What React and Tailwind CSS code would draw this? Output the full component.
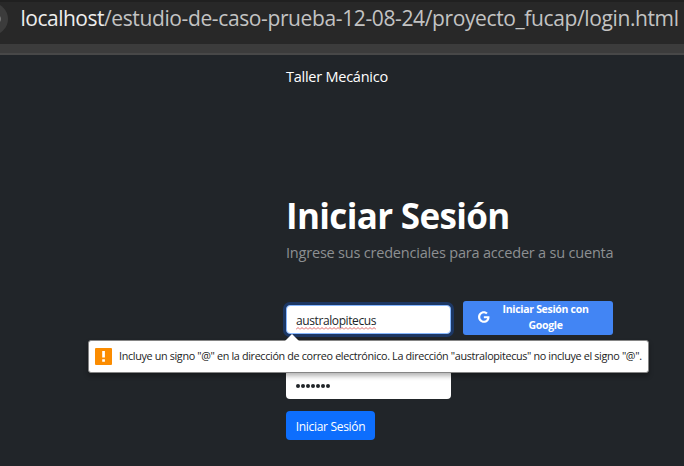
function GoogleIcon() {
  return (
    <svg viewBox="0 0 488 512" className="-mt-[2px] h-3 w-[11.5px] shrink-0" fill="#fff" aria-hidden="true">
      <path d="M488 261.8C488 403.3 391.1 504 248 504 110.8 504 0 393.2 0 256S110.8 8 248 8c66.800 0 123 24.500 166.300 64.900l-67.500 64.900C258.500 52.600 94.300 116.600 94.300 256c0 86.500 69.100 156.600 153.700 156.600 98.200 0 135-70.400 140.800-106.900H248v-85.300h236.100c2.300 12.700 3.900 24.900 3.900 41.400z" />
    </svg>
  );
}

function AddressBar() {
  return (
    <header className="h-[55px] overflow-hidden border-b-2 border-[#484848] bg-[#3c3c3c]">
      <div className="flex h-11 items-center border-t-2 border-[#202020] bg-[#282828]">
        <div className="-ml-6 flex size-8 shrink-0 items-center justify-end rounded-full bg-[#3c3c3c] -mt-[8px]">
          <span className="size-2.5 rounded-full border-2 border-[#777] -translate-x-[7px]" />
        </div>
        <p className="ml-[12.500px] -mt-[10px] whitespace-nowrap text-[21px] leading-8 tracking-[-0.38px] text-[#c3c3c3]">
          <span className="tracking-[-0.500px] text-[#ededed]">localhost</span>/estudio-de-caso-prueba-12-08-24/proyecto_fucap/login.html
        </p>
      </div>
    </header>
  );
}

function SpellingMark() {
  return (
    <svg className="absolute left-0 top-[13px] h-[3px] w-[80px]" aria-hidden="true">
      <defs>
        <pattern id="squiggle" width="4" height="3" patternUnits="userSpaceOnUse">
          <path d="M0 2.500L2 0.500L4 2.500" fill="none" stroke="#d94141" strokeWidth="0.8" />
        </pattern>
      </defs>
      <rect width="80" height="3" fill="url(#squiggle)" />
    </svg>
  );
}

function ValidationBubble() {
  return (
    <div className="absolute -left-[198px] top-[35px] z-10 w-[561px]">
      <svg viewBox="0 0 14 7" className="absolute -top-[6px] left-[197px] h-[7px] w-3.5" aria-hidden="true">
        <path d="M0 7L7 0l7 7z" fill="#fff" />
      </svg>
      <div className="flex h-[33px] items-center rounded-[3px] border border-[#858585] bg-white pl-[6px] shadow-[0_3px_5px_rgba(0,0,0,0.3)]">
        <svg viewBox="0 0 17 17" className="-mt-[1px] size-[17px] shrink-0" aria-hidden="true">
          <rect width="17" height="17" rx="1" fill="#fb8c00" />
          <path d="M7.200 3h2.700v6.500H7.200zM7.200 11.200h2.700v2.600H7.200z" fill="#fff" />
        </svg>
        <p className="-mt-[1px] ml-[7px] whitespace-nowrap text-[10.800px] leading-4 tracking-[-0.345px] text-[#222]">
          Incluye un signo "@" en la dirección de correo electrónico. La dirección "australopitecus" no incluye el signo "@".
        </p>
      </div>
    </div>
  );
}

export default function App() {
  return (
    <div className="h-[466px] w-[684px] overflow-hidden bg-[#212529] font-['Open_Sans','Noto_Sans',sans-serif]">
      <AddressBar />
      <main className="pl-[286px]">
        <p className="pt-[11px] text-[14.500px] leading-[22px] tracking-[-0.25px] whitespace-nowrap text-white">Taller Mecánico</p>
        <h1 className="mt-[106px] text-[35px] leading-[44px] font-bold tracking-[-0.65px] whitespace-nowrap text-white">Iniciar Sesión</h1>
        <p className="mt-[4px] text-[14.500px] leading-[22px] tracking-[-0.2px] whitespace-nowrap text-[#8d9092]">
          Ingrese sus credenciales para acceder a su cuenta
        </p>
        <form className="mt-[37px]">
          <div className="relative flex gap-3">
            <div className="mt-[4px] flex h-[29px] w-[165px] items-center rounded-[4px] border border-[#86b7fe] bg-white pl-[9px] shadow-[0_0_0_3px_#1c3764]">
              <span className="relative mt-[3px] text-[12px] leading-[14px] tracking-[-0.4px] text-[#212529]">
                australopitecus
                <SpellingMark />
              </span>
            </div>
            <button type="button" className="flex h-[34px] w-[150px] items-center rounded-[3px] bg-[#4285f4] pl-[15px] text-white">
              <GoogleIcon />
              <span className="-mt-[3px] ml-[7px] w-[98px] text-center text-[10.500px] leading-[16px] font-bold tracking-[-0.3px]">
                Iniciar Sesión con Google
              </span>
            </button>
            <div className="absolute left-0 top-[4px]">
              <ValidationBubble />
            </div>
          </div>
          <div className="mt-[35px] flex h-[29px] w-[165px] items-center gap-[1.500px] rounded-[4px] bg-white pl-[10px]">
            {[0, 1, 2, 3, 4, 5, 6].map((i) => (
              <span key={i} className="mt-[3px] size-[3.500px] rounded-full bg-[#212529]" />
            ))}
          </div>
          <button type="button" className="mt-3 flex h-[29px] w-[89px] items-center justify-center rounded-[4px] bg-[#0d6efd] pt-[2px] text-[12px] tracking-[-0.3px] whitespace-nowrap text-white">
            Iniciar Sesión
          </button>
        </form>
      </main>
    </div>
  );
}
